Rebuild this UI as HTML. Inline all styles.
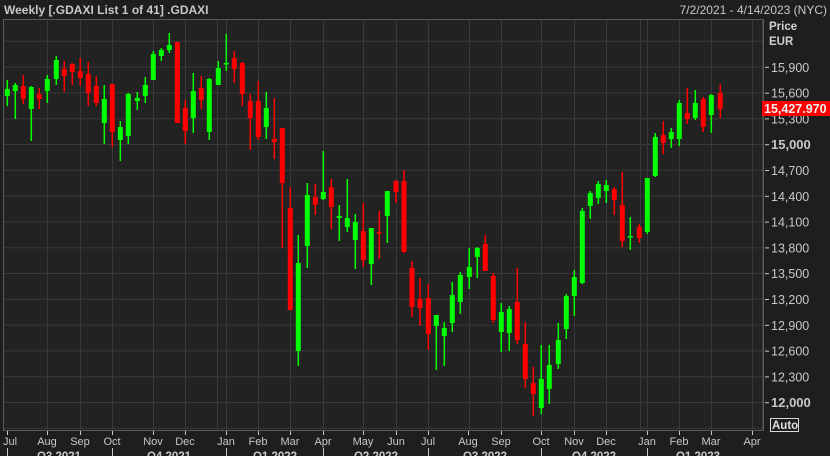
<!DOCTYPE html>
<html><head><meta charset="utf-8"><style>
html,body{margin:0;padding:0;background:#1e1e1e;width:830px;height:456px;overflow:hidden}
svg{display:block;font-family:"Liberation Sans",sans-serif}
</style></head><body>
<svg id="s" width="830" height="456" xmlns="http://www.w3.org/2000/svg">
<rect width="830" height="456" fill="#1e1e1e"/>
<rect x="3" y="19" width="760" height="411" fill="#222222"/>
<g id="grid" stroke="#393939" stroke-width="1"></g>
<rect x="3.5" y="19.5" width="759.5" height="411" fill="none" stroke="#5a5a5a"/>
<g id="c"></g>
<text x="4" y="14" fill="#c8c8c8" font-size="12" font-weight="bold">Weekly [.GDAXI List 1 of 41] .GDAXI</text>
<text x="827" y="14" fill="#c8c8c8" font-size="12" text-anchor="end">7/2/2021 - 4/14/2023 (NYC)</text>
<text x="769" y="30" fill="#d0d0d0" font-size="11.5" font-weight="bold">Price</text>
<text x="769" y="45" fill="#d0d0d0" font-size="11.5" font-weight="bold">EUR</text>
<g id="py" fill="#c8c8c8" font-size="12.5"></g>
<rect x="762" y="101" width="68" height="15" fill="#ff0000"/>
<text x="764" y="113" fill="#f0f0f0" font-size="12.5" font-weight="bold">15,427.970</text>
<rect x="770.5" y="418.5" width="28" height="13" fill="none" stroke="#d8d8d8"/>
<text x="772" y="429" fill="#e0e0e0" font-size="11.5" font-weight="bold">Auto</text>
<g id="mx" fill="#c8c8c8" font-size="11"></g>
<g id="qx" fill="#c8c8c8" font-size="11.5" font-weight="bold"></g>
</svg>
<script>
var NS="http://www.w3.org/2000/svg";
function el(p,t,a,txt){var e=document.createElementNS(NS,t);for(var k in a)e.setAttribute(k,a[k]);if(txt)e.textContent=txt;document.getElementById(p).appendChild(e);}
for(var i=0;i<16;i++){var y=41.3+i*25.8;if(y<430)el("grid","line",{x1:3,x2:763,y1:y,y2:y});}
[47,80,112,153,185,217,226,258,290,323,363,396,428,469,501,541,574,606,640,647,679,711,752].forEach(function(x){el("grid","line",{x1:x+.5,x2:x+.5,y1:19,y2:430});});
var prices=["15,900","15,600","15,300","15,000","14,700","14,400","14,100","13,800","13,500","13,200","12,900","12,600","12,300","12,000"];
prices.forEach(function(p,i){var y=67.3+i*25.8;var b=(p=="15,000"||p=="12,000");
el("py","line",{x1:765,x2:769,y1:y,y2:y,stroke:"#c8c8c8"});
el("py","text",{x:771,y:y+4.5,"font-weight":b?"bold":"normal","font-size":b?"13":"12.5"},p);});
el("py","line",{x1:763.5,x2:763.5,y1:19,y2:430,stroke:"#5a5a5a"});
var d=[[7.3,80,89,96,106,1],[15.3,83,85,91,119,1],[23.3,75,86,99,104,0],[31.3,86,87,109,141,1],[39.3,88,94,99,109,0],[47.3,75,79,91,103,1],[56.3,56,60,79,85,1],[64.3,61,69,76,92,0],[72.3,63,64,72,85,0],[80.3,58,71,78,86,0],[88.3,62,74,93,106,0],[96.3,76,86,103,106,0],[104.3,85,99,123,144,1],[112.3,84,84,132,147,0],[120.3,121,127,140,161,1],[128.3,93,94,136,144,1],[137.3,92,98,101,110,1],[145.3,77,85,96,103,1],[153.3,51,54,80,80,1],[161.3,48,50,56,61,1],[169.3,33,45,50,53,1],[177.3,42,42,123,123,0],[185.3,100,108,131,144,0],[193.3,73,91,118,133,1],[201.3,76,88,100,109,0],[209.3,78,79,132,140,1],[218.3,61,68,85,85,1],[226.3,34,63,64,71,1],[234.3,51,58,69,83,0],[242.3,62,63,94,106,0],[250.3,94,101,118,150,0],[258.3,81,101,137,140,0],[266.3,92,108,127,139,1],[274.3,98,139,142,159,0],[282.3,128,128,183,248,0],[290.3,187,208,310,310,0],[298.3,235,263,351,366,1],[307.3,183,195,246,268,1],[315.3,184,197,205,215,0],[323.3,151,192,199,200,1],[331.3,179,187,207,229,0],[339.3,205,216,218,241,1],[347.3,179,218,227,232,1],[355.3,214,222,240,269,1],[363.3,203,231,260,267,0],[371.3,228,228,264,285,1],[379.3,211,232,233,259,0],[387.3,191,191,216,243,1],[396,180,181,192,203,0],[404,170,181,252,253,0],[412,261,268,307,317,0],[420,278,299,308,326,0],[428.3,284,298,334,350,0],[436.3,315,315,326,370,1],[444.3,322,328,336,366,1],[452.3,282,295,323,332,1],[460.3,272,275,302,314,1],[469.3,248,267,277,289,1],[477.3,247,248,257,278,1],[485.3,235,244,271,271,0],[493.3,273,276,320,323,0],[501.3,303,312,332,352,1],[509.3,306,309,333,351,1],[517.3,268,302,340,344,0],[525.3,322,344,379,388,0],[533.3,367,383,394,416,0],[541.3,345,379,408,414,1],[549.3,345,365,389,404,1],[558.3,323,340,364,369,1],[566.3,294,296,329,339,1],[574.3,270,277,296,316,1],[582.3,208,211,283,284,1],[590.3,191,193,206,219,1],[598.3,181,184,198,204,1],[606.3,180,185,191,203,1],[614.3,187,189,200,215,0],[622.3,172,205,241,247,0],[630.3,217,236,237,250,1],[639.3,224,227,238,243,0],[647.3,178,178,232,234,1],[655.3,133,137,176,177,1],[663.3,121,135,143,154,0],[671.3,128,132,139,148,1],[679.3,100,103,139,146,1],[687.3,88,113,119,124,0],[695.3,90,103,118,120,1],[703.3,97,99,127,132,0],[711.3,94,95,115,133,1],[720.3,84,93,109,118,0]];
d.forEach(function(c){var col=c[5]?"#00ff00":"#ff0000";
el("c","rect",{x:c[0]-0.75,y:c[1],width:1.5,height:c[4]-c[1],fill:col});
el("c","rect",{x:c[0]-2.5,y:c[2],width:5,height:Math.max(1.5,c[3]-c[2]),fill:col});});
var m=[["Jul",7],["Aug",47],["Sep",80],["Oct",112],["Nov",153],["Dec",185],["Jan",226],["Feb",258],["Mar",290],["Apr",323],["May",363],["Jun",396],["Jul",428],["Aug",468],["Sep",501],["Oct",541],["Nov",574],["Dec",606],["Jan",647],["Feb",679],["Mar",711],["Apr",752]];
m.forEach(function(a,i){el("mx","line",{x1:a[1]+.5,x2:a[1]+.5,y1:431,y2:435,stroke:"#c8c8c8"});
el("mx","text",{x:i==0?3:a[1],y:445,"text-anchor":i==0?"start":"middle"},a[0]);});
[7,112,226,323,428,541,647].forEach(function(x){el("qx","line",{x1:x+.5,x2:x+.5,y1:448,y2:456,stroke:"#c8c8c8"});});
[["Q3 2021",59],["Q4 2021",169],["Q1 2022",275],["Q2 2022",376],["Q3 2022",485],["Q4 2022",594],["Q1 2023",698]].forEach(function(q){el("qx","text",{x:q[1],y:460,"text-anchor":"middle"},q[0]);});
</script>
</body></html>
